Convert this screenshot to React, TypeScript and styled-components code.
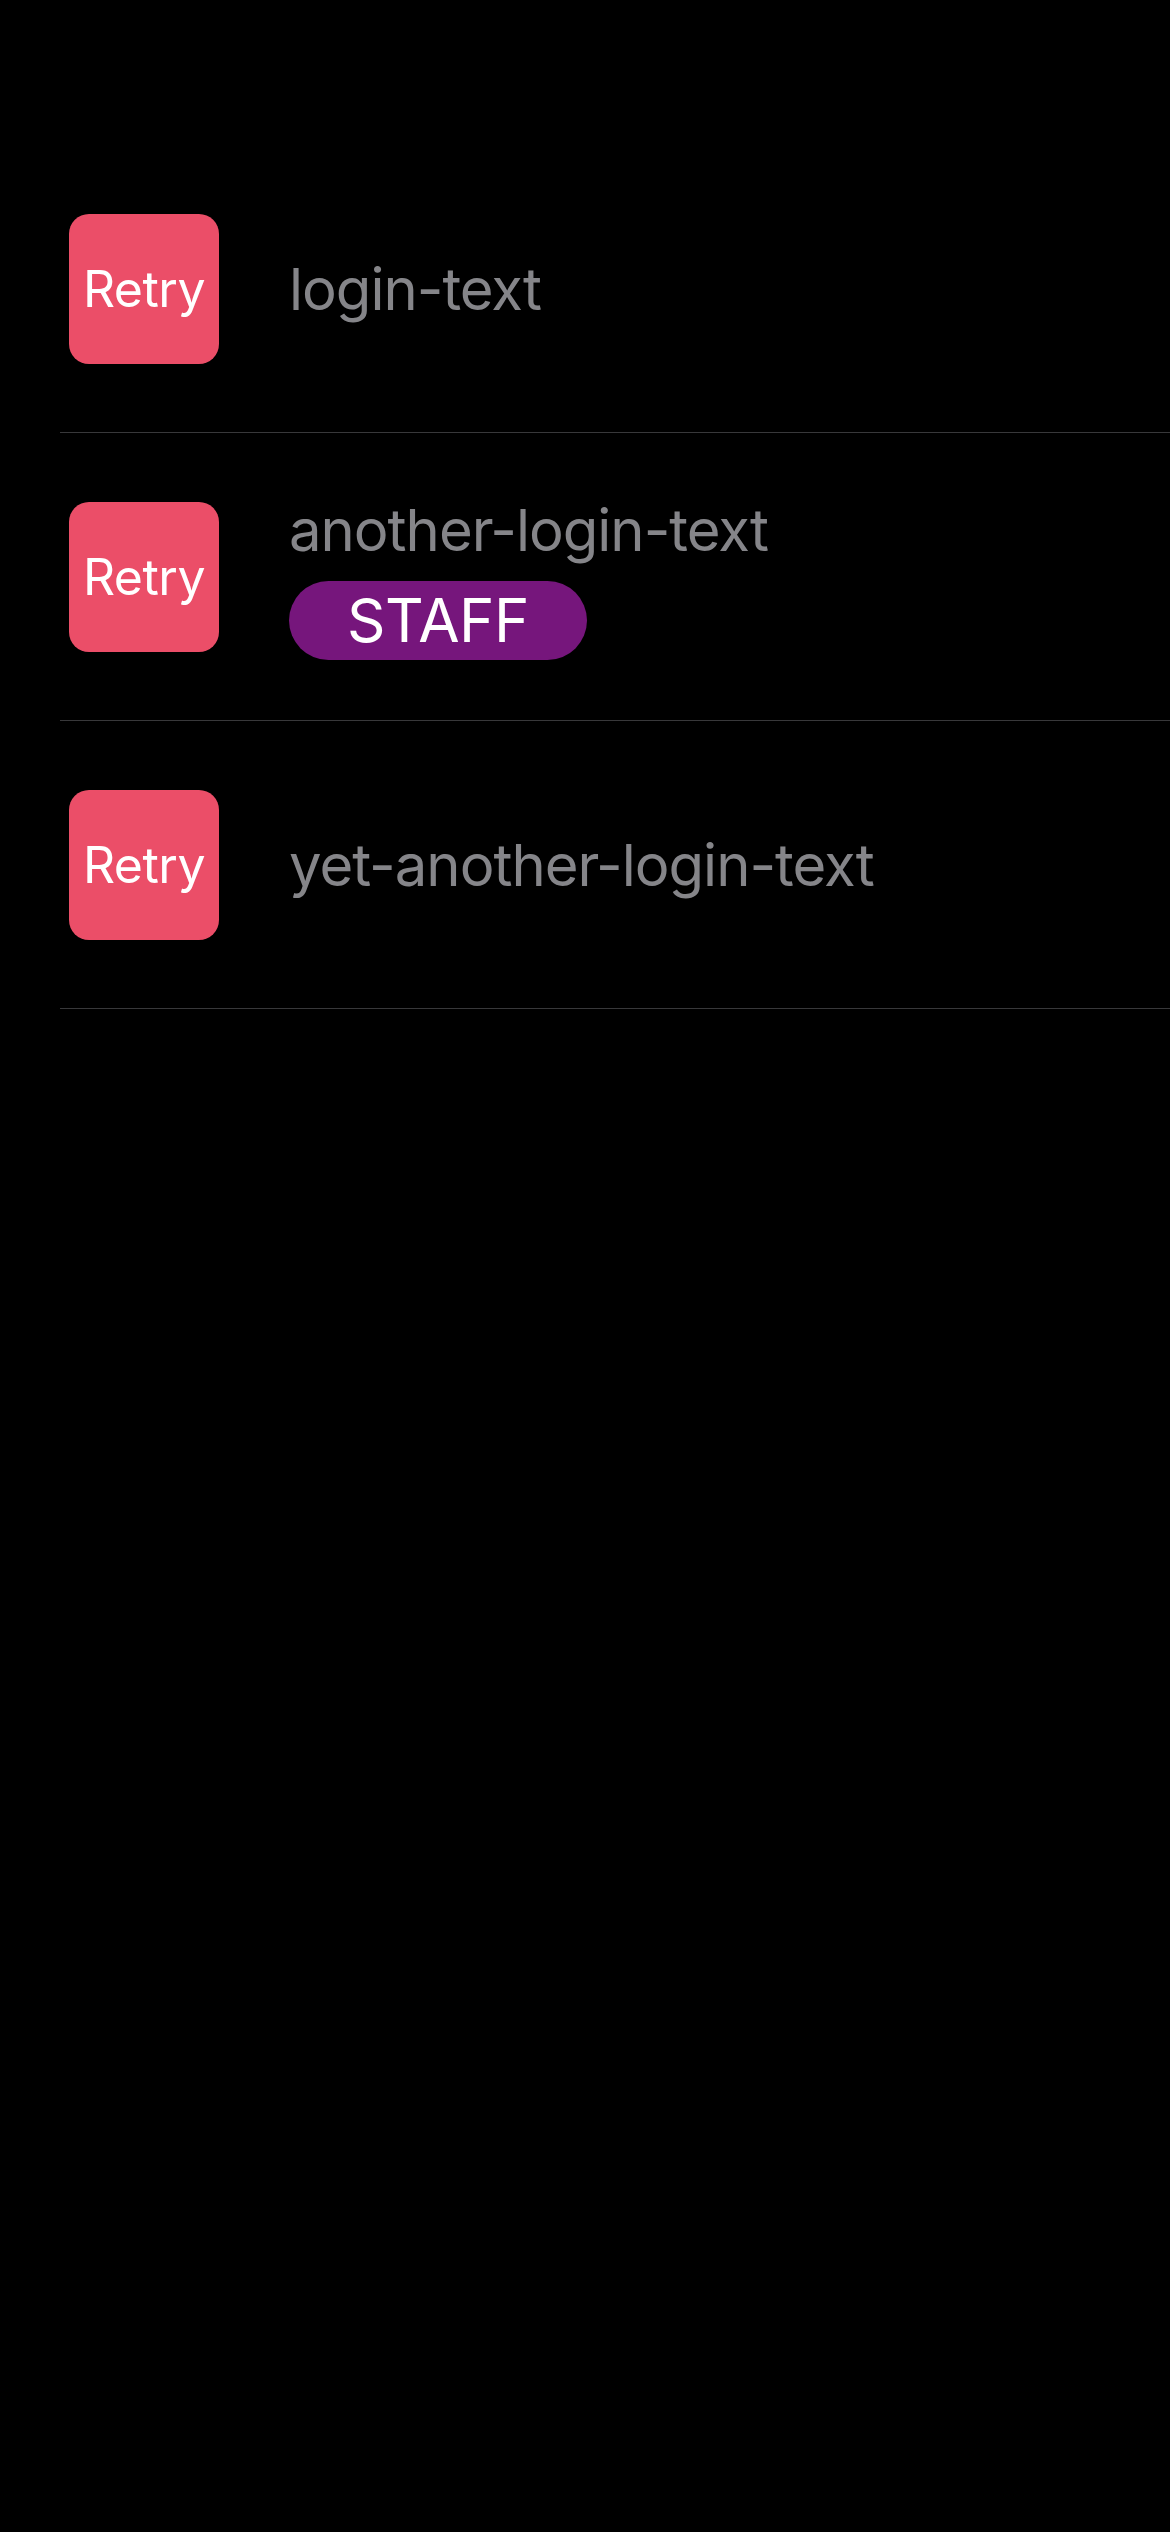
import React from "react";
import styled, { createGlobalStyle } from "styled-components";

const GlobalStyle = createGlobalStyle`
  html, body {
    margin: 0;
    padding: 0;
    background: #000000;
  }
  body {
    font-family: Inter, "Noto Sans", "Liberation Sans", sans-serif;
    -webkit-font-smoothing: antialiased;
  }
`;

const Screen = styled.div`
  min-height: 2532px;
  width: 1170px;
  background: #000000;
  padding-top: 145px;
  box-sizing: border-box;
`;

const List = styled.ul`
  list-style: none;
  margin: 0;
  padding: 0 0 0 60px;
`;

const Row = styled.li`
  display: flex;
  align-items: center;
  gap: 70px;
  height: 287px;
  padding-left: 9px;
  border-bottom: 1px solid #38383a;
`;

const RetryButton = styled.button`
  flex: 0 0 auto;
  width: 150px;
  height: 150px;
  border: none;
  border-radius: 20px;
  background: #eb4e68;
  color: #ffffff;
  font-family: Inter, "Noto Sans", sans-serif;
  font-size: 50px;
  font-weight: 400;
  letter-spacing: -0.5px;
  padding: 0;
  display: flex;
  align-items: center;
  justify-content: center;
`;

const Info = styled.div`
  display: flex;
  flex-direction: column;
  align-items: flex-start;
  gap: 15px;
`;

const Label = styled.span`
  color: #858589;
  font-size: 58px;
  line-height: 72px;
  font-weight: 400;
  letter-spacing: -1px;
`;

const Badge = styled.span`
  display: inline-flex;
  align-items: center;
  justify-content: center;
  height: 79px;
  width: 298px;
  box-sizing: border-box;
  border-radius: 40px;
  background: #76167c;
  color: #ffffff;
  font-size: 60px;
  font-weight: 400;
  letter-spacing: -0.5px;
`;

type Login = { text: string; staff?: boolean };

const logins: Login[] = [
  { text: "login-text" },
  { text: "another-login-text", staff: true },
  { text: "yet-another-login-text" },
];

export default function App() {
  return (
    <>
      <GlobalStyle />
      <Screen>
        <List>
          {logins.map((l) => (
            <Row key={l.text}>
              <RetryButton>Retry</RetryButton>
              <Info>
                <Label>{l.text}</Label>
                {l.staff && <Badge>STAFF</Badge>}
              </Info>
            </Row>
          ))}
        </List>
      </Screen>
    </>
  );
}
